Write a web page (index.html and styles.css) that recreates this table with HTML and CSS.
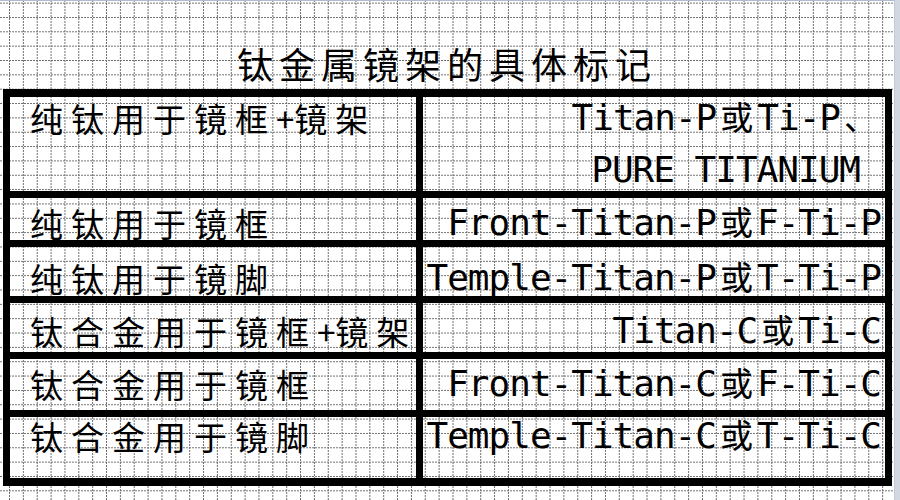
FILE: index.html
```html
<!DOCTYPE html>
<html lang="zh-CN">
<head>
<meta charset="utf-8">
<title>钛金属镜架的具体标记</title>
<link rel="stylesheet" href="styles.css">
</head>
<body>
<main class="sheet">
  <h1 class="title">钛金属镜架的具体标记</h1>
  <div class="table">
    <div class="cell name r1">纯钛用于镜框<span class="plus">+</span>镜架</div>
    <div class="cell code r1">
      <div>Titan-P<span class="fw">或</span>Ti-P<span class="fw">、</span></div>
      <div class="line2">PURE TITANIUM</div>
    </div>

    <div class="cell name r2">纯钛用于镜框</div>
    <div class="cell code r2">Front-Titan-P<span class="fw">或</span>F-Ti-P</div>

    <div class="cell name r3">纯钛用于镜脚</div>
    <div class="cell code r3">Temple-Titan-P<span class="fw">或</span>T-Ti-P</div>

    <div class="cell name r4">钛合金用于镜框<span class="plus">+</span>镜架</div>
    <div class="cell code r4">Titan-C<span class="fw">或</span>Ti-C</div>

    <div class="cell name r5">钛合金用于镜框</div>
    <div class="cell code r5">Front-Titan-C<span class="fw">或</span>F-Ti-C</div>

    <div class="cell name r6">钛合金用于镜脚</div>
    <div class="cell code r6">Temple-Titan-C<span class="fw">或</span>T-Ti-C</div>
  </div>
</main>
<div class="edge"></div>
</body>
</html>
```
FILE: styles.css
```css
html, body {
  margin: 0;
  padding: 0;
}

body {
  width: 900px;
  height: 500px;
  overflow: hidden;
  display: flex;
  background: #fff;
  color: #000;
}

.sheet,
.cell {
  background-color: #fff;
  background-image:
    conic-gradient(from 270deg at 1px 2px, #6e6e6e 25%, transparent 0),
    conic-gradient(from 270deg at 2px 1px, #6e6e6e 25%, transparent 0);
  background-size: 13.86px 3px, 3px 14.35px;
  background-position: 9px 0, 0 2.65px;
  background-attachment: fixed, fixed;
}

.sheet {
  flex: 1;
  border-top: 1px solid #aebbd3;
}

.edge {
  width: 5px;
  background: #d2d8e2;
  border-left: 1px solid #c3cad6;
}

.title {
  margin: 0;
  padding-top: 44px;
  height: 36px;
  font: 400 36px/36px "Noto Sans CJK SC", sans-serif;
  letter-spacing: 6px;
  text-align: center;
  color: #000;
}

.table {
  margin: 8px 0 0 3px;
  width: max-content;
  display: grid;
  grid-template-columns: 406px 462px;
  grid-template-rows: 94px 42px 49px 49px 51px 61px;
  gap: 7px;
  padding: 8px 7px;
  background: #000;
}

.cell {
  box-sizing: border-box;
  white-space: nowrap;
}

.name {
  padding-left: 20px;
  font: 400 33px/36px "Noto Sans CJK SC", sans-serif;
  letter-spacing: 8px;
}

.plus {
  letter-spacing: 0;
}

.code {
  text-align: right;
  padding-right: 4px;
  font: 400 36px/36px "DejaVu Sans Mono", "Noto Sans CJK SC", monospace;
  letter-spacing: -1px;
}

.fw {
  display: inline-block;
  width: 41px;
  text-align: center;
  font: 400 33px/30px "Noto Sans CJK SC", sans-serif;
  letter-spacing: 0;
}

.line2 {
  margin-top: 16px;
  padding-right: 21px;
}

.r1 { padding-top: 3px; }
.r2 { padding-top: 6.5px; }
.r3 { padding-top: 12.5px; }
.r4 { padding-top: 9.5px; }
.r5 { padding-top: 6.5px; }
.r6 { padding-top: 0.5px; }
```
